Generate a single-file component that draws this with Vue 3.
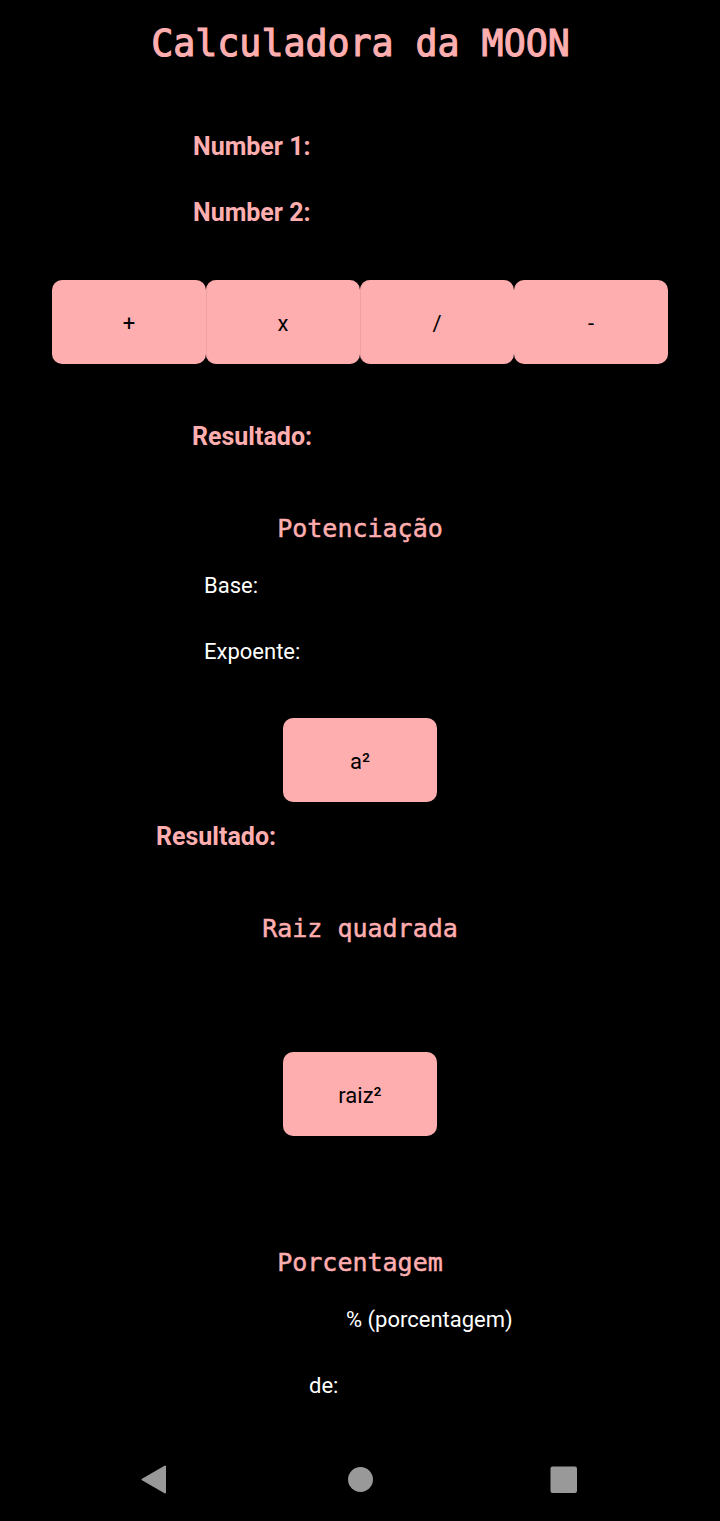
<script setup>
const operations = ['+', 'x', '/', '-']
</script>

<template>
  <main class="screen">
    <h1>Calculadora da MOON</h1>
    <p class="label first">Number 1:</p>
    <p class="label">Number 2:</p>
    <div class="operations">
      <button v-for="op in operations" :key="op">{{ op }}</button>
    </div>
    <p class="label result">Resultado:</p>
    <h2>Potenciação</h2>
    <p class="field">Base:</p>
    <p class="field">Expoente:</p>
    <button class="power">a²</button>
    <p class="label power-result">Resultado:</p>
    <h2>Raiz quadrada</h2>
    <button class="root">raiz²</button>
    <h2 class="percent-title">Porcentagem</h2>
    <p class="field percent">% (porcentagem)</p>
    <p class="field of">de:</p>
    <nav>
      <svg viewBox="0 0 720 40" width="720" height="40">
        <path d="M142.5 19.5 165 6.5V32.5Z" stroke="#999" stroke-width="2" stroke-linejoin="round" />
        <circle cx="360.5" cy="19.5" r="12.5" />
        <rect x="550.5" y="6.5" width="26.5" height="26.5" rx="2" />
      </svg>
    </nav>
  </main>
</template>

<style>
body { background: #000; }
</style>
<style scoped>
.screen { width: 720px; height: 1521px; overflow: hidden; display: flex; flex-direction: column; align-items: center; background: #000; font: 22px/32px Roboto, sans-serif; color: #fff; }
h1, h2, p { margin: 0; white-space: pre; flex: none; }
h1, h2 { font-family: "DejaVu Sans Mono", monospace; font-weight: 400; color: #ffaeb0; }
h1 { font-size: 36.6px; line-height: 48px; margin-top: 20px; padding-left: 1px; -webkit-text-stroke: 1.1px #ffaeb0; }
h2 { font-size: 25px; line-height: 32px; margin-top: 60px; -webkit-text-stroke: .5px #ffaeb0; }
.label, .field { align-self: flex-start; }
.label { margin: 34px 0 0 193px; font-size: 25px; font-weight: 700; color: #ffaeb0; }
.label.first { margin-top: 63px; }
.operations { display: flex; margin-top: 51px; }
.operations button:nth-child(2), .operations button:nth-child(3) { box-shadow: inset 1px 0 #eea1a3; }
button { flex: none; width: 154px; height: 84px; padding: 4px 0 0; border: 0; border-radius: 10px; background: #ffaeb0; color: #000; font: 22px/32px Roboto, sans-serif; }
.label.result { margin: 57px 0 0 192px; }
.field { margin: 25px 0 0 204px; }
.field + .field { margin-top: 34px; }
.power { margin-top: 50px; }
.label.power-result { margin: 19px 0 0 156px; }
.root { margin-top: 107px; }
h2.percent-title { margin-top: 111px; }
.field.percent { margin-left: 346px; }
.field.of { margin-left: 309px; }
nav { margin-top: 58px; height: 40px; }
svg { display: block; fill: #999; }
</style>
